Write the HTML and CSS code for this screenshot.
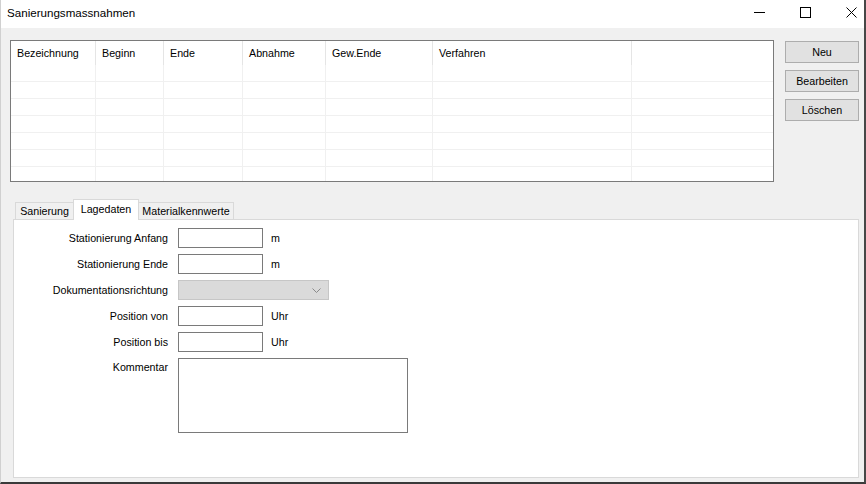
FILE: index.html
```html
<!DOCTYPE html>
<html lang="de">
<head>
<meta charset="utf-8">
<title>Sanierungsmassnahmen</title>
<link rel="stylesheet" href="styles.css">
</head>
<body>
<div class="window">
  <div class="titlebar">
    <span class="title">Sanierungsmassnahmen</span>
    <div class="controls">
      <svg class="ctl" width="11" height="11" viewBox="0 0 11 11"><line x1="0" y1="5.5" x2="11" y2="5.5" stroke="#000" stroke-width="1"/></svg>
      <svg class="ctl" width="11" height="11" viewBox="0 0 11 11"><rect x="0.5" y="0.5" width="10" height="10" fill="none" stroke="#000" stroke-width="1"/></svg>
      <svg class="ctl" width="11" height="11" viewBox="0 0 11 11"><path d="M0.5 0.5 L10.5 10.5 M10.5 0.5 L0.5 10.5" stroke="#000" stroke-width="1" fill="none"/></svg>
    </div>
  </div>
  <div class="client">
    <div class="top">
      <div class="listview">
        <div class="lv-row lv-header">
          <div class="cell">Bezeichnung</div>
          <div class="cell">Beginn</div>
          <div class="cell">Ende</div>
          <div class="cell">Abnahme</div>
          <div class="cell">Gew.Ende</div>
          <div class="cell">Verfahren</div>
          <div class="cell last"></div>
        </div>
        <div class="lv-row"><div class="cell"></div><div class="cell"></div><div class="cell"></div><div class="cell"></div><div class="cell"></div><div class="cell"></div><div class="cell last"></div></div>
        <div class="lv-row"><div class="cell"></div><div class="cell"></div><div class="cell"></div><div class="cell"></div><div class="cell"></div><div class="cell"></div><div class="cell last"></div></div>
        <div class="lv-row"><div class="cell"></div><div class="cell"></div><div class="cell"></div><div class="cell"></div><div class="cell"></div><div class="cell"></div><div class="cell last"></div></div>
        <div class="lv-row"><div class="cell"></div><div class="cell"></div><div class="cell"></div><div class="cell"></div><div class="cell"></div><div class="cell"></div><div class="cell last"></div></div>
        <div class="lv-row"><div class="cell"></div><div class="cell"></div><div class="cell"></div><div class="cell"></div><div class="cell"></div><div class="cell"></div><div class="cell last"></div></div>
        <div class="lv-row"><div class="cell"></div><div class="cell"></div><div class="cell"></div><div class="cell"></div><div class="cell"></div><div class="cell"></div><div class="cell last"></div></div>
        <div class="lv-row"><div class="cell"></div><div class="cell"></div><div class="cell"></div><div class="cell"></div><div class="cell"></div><div class="cell"></div><div class="cell last"></div></div>
      </div>
      <div class="buttons">
        <button class="btn">Neu</button>
        <button class="btn">Bearbeiten</button>
        <button class="btn">Löschen</button>
      </div>
    </div>
    <div class="tabs">
      <div class="tab t1">Sanierung</div>
      <div class="tab t2 active">Lagedaten</div>
      <div class="tab t3">Materialkennwerte</div>
    </div>
    <div class="panel">
      <div class="frow">
        <label class="lbl">Stationierung Anfang</label>
        <div class="input short"></div>
        <span class="unit">m</span>
      </div>
      <div class="frow">
        <label class="lbl">Stationierung Ende</label>
        <div class="input short"></div>
        <span class="unit">m</span>
      </div>
      <div class="frow">
        <label class="lbl">Dokumentationsrichtung</label>
        <div class="combo">
          <svg class="chev" width="9" height="5" viewBox="0 0 9 5"><polyline points="0.5,0.5 4.5,4.5 8.5,0.5" fill="none" stroke="#8a8a8a" stroke-width="1"/></svg>
        </div>
      </div>
      <div class="frow">
        <label class="lbl">Position von</label>
        <div class="input short"></div>
        <span class="unit">Uhr</span>
      </div>
      <div class="frow">
        <label class="lbl">Position bis</label>
        <div class="input short"></div>
        <span class="unit">Uhr</span>
      </div>
      <div class="frow multi">
        <label class="lbl">Kommentar</label>
        <div class="input memo"></div>
      </div>
    </div>
  </div>
</div>
</body>
</html>
```

FILE: styles.css
```css
* { box-sizing: border-box; }
html, body { margin: 0; padding: 0; background: #f0f0f0; }
body {
  font-family: "Liberation Sans", Arial, sans-serif;
  font-size: 10.7px;
  color: #000;
}
.window {
  width: 866px;
  height: 484px;
  background: #f0f0f0;
  border-left: 1px solid #d0d0d0;
  border-right: 2px solid #474747;
  border-bottom: 2px solid #3a3a3a;
  display: flex;
  flex-direction: column;
  overflow: hidden;
}
.titlebar {
  height: 28px;
  background: #fff;
  display: flex;
  align-items: center;
  padding-bottom: 3px;
  flex: none;
}
.title {
  font-size: 11.6px;
  padding-left: 6px;
}
.controls {
  margin-left: auto;
  display: flex;
  align-items: center;
  gap: 35px;
  margin-right: 7px;
}
.ctl { display: block; }
.client {
  flex: 1;
  display: flex;
  flex-direction: column;
}
.top {
  display: flex;
  align-items: flex-start;
  margin-top: 12px;
  margin-left: 9px;
}
.listview {
  width: 764px;
  height: 142px;
  border: 1px solid #7a7a7a;
  background: #fff;
  overflow: hidden;
}
.lv-row {
  display: grid;
  grid-template-columns: 85px 68px 79px 83px 107px 199px 1fr;
  height: 17px;
  border-bottom: 1px solid #f0f0f0;
}
.lv-row .cell { border-right: 1px solid #f0f0f0; }
.lv-row .cell.last { border-right: none; }
.lv-header {
  height: 24px;
  border-bottom: none;
}
.lv-header .cell {
  border-right: 1px solid #e5e5e5;
  padding-left: 6px;
  padding-top: 6px;
  white-space: nowrap;
}
.buttons {
  margin-left: 11px;
  margin-top: 1px;
  display: flex;
  flex-direction: column;
  gap: 7px;
}
.btn {
  width: 74px;
  height: 22px;
  background: #e1e1e1;
  border: 1px solid #adadad;
  font-family: "Liberation Sans", Arial, sans-serif;
  font-size: 10.7px;
  color: #000;
  padding: 0;
  margin: 0;
}
.tabs {
  display: flex;
  align-items: flex-end;
  margin-top: 16px;
  margin-left: 14px;
  height: 21px;
  position: relative;
  z-index: 1;
}
.tab {
  height: 17px;
  border: 1px solid #d9d9d9;
  border-bottom: none;
  background: #f0f0f0;
  text-align: center;
  padding-top: 2px;
  white-space: nowrap;
}
.t1 { width: 59px; }
.t2 { width: 66px; margin-left: -1px; }
.t3 { width: 96px; margin-left: -1px; }
.tab.active {
  height: 21px;
  background: #fff;
  margin-bottom: -1px;
  padding-top: 3px;
  position: relative;
  z-index: 2;
}
.panel {
  margin-left: 12px;
  width: 846px;
  height: 259px;
  border: 1px solid #d9d9d9;
  background: #fff;
  padding-top: 8px;
  display: flex;
  flex-direction: column;
  gap: 6px;
}
.frow {
  display: flex;
  align-items: center;
  height: 20px;
}
.frow.multi {
  align-items: flex-start;
  height: 75px;
}
.lbl {
  width: 154px;
  text-align: right;
  margin-right: 10px;
  white-space: nowrap;
}
.multi .lbl { padding-top: 3px; }
.input {
  background: #fff;
  border: 1px solid #7a7a7a;
}
.input.short { width: 85px; height: 20px; }
.input.memo { width: 230px; height: 75px; }
.unit { margin-left: 8px; }
.combo {
  width: 151px;
  height: 20px;
  background: #dadada;
  border: 1px solid #c6c6c6;
  display: flex;
  align-items: center;
  justify-content: flex-end;
  padding-right: 7px;
}
.chev { display: block; }
```
